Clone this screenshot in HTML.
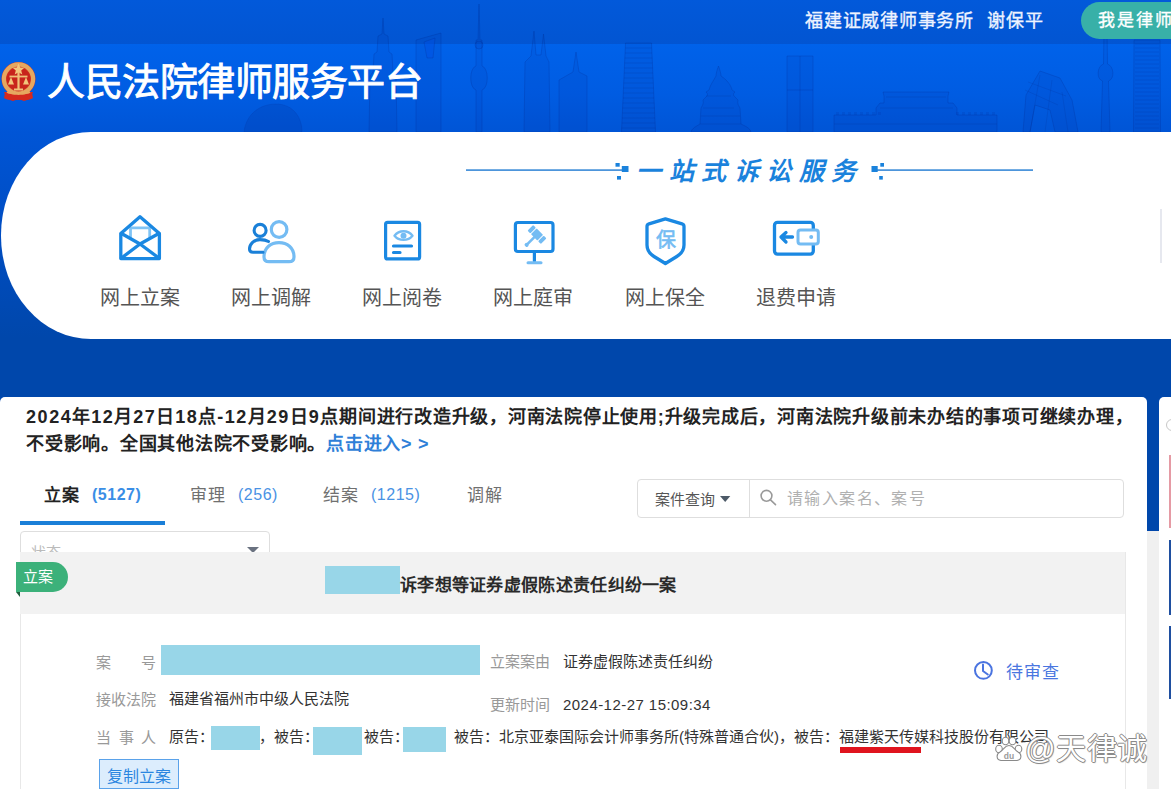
<!DOCTYPE html>
<html lang="zh-CN"><head><meta charset="utf-8">
<style>
*{margin:0;padding:0;box-sizing:border-box}
html,body{width:1171px;height:789px;overflow:hidden}
body{font-family:"Liberation Sans",sans-serif;text-spacing-trim:space-all;background:#0047ab;position:relative}
.abs{position:absolute;white-space:nowrap}
svg.abs{overflow:visible}
#topbar{left:0;top:0;width:1171px;height:44px;background:linear-gradient(#0259da,#0255d2)}
#banner{left:0;top:44px;width:1171px;height:300px;background:linear-gradient(#0062ea 0px,#005ce2 50px,#0055d6 88px,#004dc2 190px,#0047ab 294px)}
#title{left:47px;top:58px;font-size:38px;letter-spacing:-0.45px;color:#fff;line-height:48px;-webkit-text-stroke:0.9px #fff}
#firm1{left:805px;top:9px;font-size:18px;letter-spacing:0.75px;color:#eef3ff;line-height:24px;-webkit-text-stroke:0.35px #eef3ff}
#firm2{left:987px;top:9px;font-size:18px;letter-spacing:0.75px;color:#eef3ff;line-height:24px;-webkit-text-stroke:0.35px #eef3ff}
#btnlaw{left:1081px;top:2px;width:120px;height:37px;border-radius:19px;background:#38b0a8;color:#fff;font-size:17px;letter-spacing:2px;line-height:37px;padding-left:17px;-webkit-text-stroke:0.35px #fff}
#card{left:1px;top:132px;width:1170px;height:206.5px;background:#fff;border-radius:90px 0 0 90px/103px 0 0 103px}
.lbl{font-size:20px;color:#555;line-height:24px;top:286px}

#slogan{left:636px;top:155px;font-size:25px;color:#1a82dc;font-style:italic;font-weight:bold;letter-spacing:7.5px;line-height:32px}
#notice{left:0;top:397px;width:1147px;height:400px;background:#fff;border-radius:5px}
#side{left:1159px;top:397px;width:30px;height:400px;background:#fff;border-radius:5px}
#sidegap{left:1147px;top:531px;width:12px;height:260px;background:#f0f0f0}
#ntext{left:26px;top:404px;font-size:18px;letter-spacing:0.75px;font-weight:bold;color:#222;line-height:27px}
#ntext i{font-style:normal;letter-spacing:1.6px}
#ntext a{color:#2f7fd8;text-decoration:none;font-weight:bold}
.tab{top:484px;font-size:17px;letter-spacing:1px;color:#707070;line-height:24px}
.tabn{top:483px;font-size:16px;letter-spacing:0.5px;color:#4a92e4;line-height:24px}
.b{font-weight:bold}
.tab.b{color:#222}
.tabn.b{color:#3a8ee6}
#tabline{left:20px;top:521.3px;width:145px;height:3.3px;background:#1a7fd8}
#search{left:637px;top:479px;width:487px;height:39px;border:1px solid #dedede;border-radius:4px;background:#fff}
#sdiv{left:749px;top:479px;width:1px;height:39px;background:#dedede}
#stype{left:655px;top:490px;font-size:15px;color:#555;line-height:20px}
#sph{left:787px;top:488px;font-size:16px;letter-spacing:1.4px;color:#b0b0b0;line-height:22px}
#select{left:20px;top:531px;width:250px;height:40px;border:1px solid #dedede;border-radius:4px;background:#fff}
#selph{left:31px;top:543px;font-size:15px;color:#bbb;line-height:20px}
#band{left:20px;top:552px;width:1105px;height:62px;background:#f2f2f2}
#cardborder{left:20px;top:552px;width:1106px;height:260px;border:1px solid #e8e8e8}
#tag{left:16px;top:562px;width:52px;height:30px;background:#3cb17a;border-radius:0 15px 15px 0;color:#fff;font-size:15px;line-height:30px;padding-left:7px}
#tagfold{left:16px;top:592px;width:0;height:0;border-top:5px solid #1f5e3e;border-left:4px solid transparent}
.red{background:#98d6e8}
#ctitle{left:400px;top:574px;font-size:17px;letter-spacing:0.3px;font-weight:bold;color:#2a2a2a;line-height:24px}
.k{font-size:15px;color:#999;line-height:20px}
.v{font-size:15px;color:#333;line-height:20px}
#copybtn{left:99px;top:758.5px;width:80px;height:30px;background:#dcedfd;border:1.6px solid #5aa2ea;color:#2a86e0;font-size:16px;line-height:27px;padding-top:3px;text-align:center}
#status{left:1006px;top:662px;font-size:17px;letter-spacing:1.2px;color:#4a76e0;line-height:22px}
#uline{left:840px;top:747px;width:81px;height:6px;background:#e0141e}
#wm{left:1025px;top:731px;font-size:30px;letter-spacing:0.6px;color:#fff;line-height:36px;text-shadow:1px 0 0 #8a8a8a,-1px 0 0 #8a8a8a,0 1px 0 #8a8a8a,0 -1px 0 #8a8a8a,1px 1px 1px #aaa}
</style></head><body>
<div id="topbar" class="abs"></div>
<div id="banner" class="abs"></div>
<svg class="abs" style="left:0;top:0" width="1171" height="140" viewBox="0 0 1171 140">
<g fill="rgba(0,35,140,0.07)" stroke="rgba(0,35,130,0.2)" stroke-width="1">
<!-- dome building -->
<path d="M244,132 C246,114 260,104 276,104 C292,104 302,116 302,132 Z" fill="rgba(0,30,120,0.13)" stroke="rgba(0,30,120,0.12)"/>
<!-- Jin Mao -->
<path d="M383,18 L384,34 L388,36 L389,52 L392,54 L393,72 L396,76 L397,132 L369,132 L370,76 L373,72 L374,54 L377,52 L378,36 L382,34 Z"/>
<!-- SWFC -->
<path d="M416,40 L441,33 L441,132 L416,132 Z"/>
<path d="M424,42 L435,38 L433,58 L427,58 Z" fill="rgba(0,80,230,0.4)"/>
<!-- pearl tower -->
<path d="M479,4 L480,40 L482,40 L482,66 C489,68 489,88 482,90 L482,132 L476,132 L476,90 C469,88 469,68 476,66 L476,40 L478,40 Z"/>
<circle cx="479" cy="45" r="4"/>
<!-- twin spire -->
<path d="M534,31 L536,55 L541,55 L543.5,34 L546,56 L549,62 L550,132 L524,132 L525,62 L531,56 Z"/>
<!-- building -->
<path d="M559,132 L559,80 L573,72 L576,52 L579,72 L587,76 L587,132 Z"/>
<!-- cylinder tower -->
<path d="M625.5,43 L651.5,43 L655.5,132 L621.5,132 Z"/>
<g stroke="rgba(0,35,130,0.16)"><line x1="625.3" y1="48" x2="651.7" y2="48"/><line x1="625.0" y1="53" x2="652.0" y2="53"/><line x1="624.8" y1="58" x2="652.2" y2="58"/><line x1="624.6" y1="63" x2="652.4" y2="63"/><line x1="624.4" y1="68" x2="652.6" y2="68"/><line x1="624.1" y1="73" x2="652.9" y2="73"/><line x1="623.9" y1="78" x2="653.1" y2="78"/><line x1="623.7" y1="83" x2="653.3" y2="83"/><line x1="623.5" y1="88" x2="653.5" y2="88"/><line x1="623.2" y1="93" x2="653.8" y2="93"/><line x1="623.0" y1="98" x2="654.0" y2="98"/><line x1="622.8" y1="103" x2="654.2" y2="103"/><line x1="622.6" y1="108" x2="654.4" y2="108"/><line x1="622.4" y1="113" x2="654.6" y2="113"/><line x1="622.1" y1="118" x2="654.9" y2="118"/><line x1="621.9" y1="123" x2="655.1" y2="123"/><line x1="621.7" y1="128" x2="655.3" y2="128"/></g>
<!-- temple of heaven -->
<path d="M718.5,66 C720,70 721,74 721,76 C727,80 731,85 732,90 L735,92 C733,94 733,95 735,97 L738,100 C737,104 739,106 740,108 L741,124 C745,126 750,128 751,132 L691,132 C692,128 697,126 700,124 L701,108 C702,106 704,104 703,100 L706,97 C708,95 708,94 706,92 L709,90 C710,85 714,80 716,76 C716,74 717,70 718.5,66 Z"/>
<g stroke="rgba(0,35,130,0.16)"><line x1="706" y1="96" x2="731" y2="96"/><line x1="703" y1="108" x2="734" y2="108"/><line x1="701" y1="116" x2="740" y2="116"/><line x1="700" y1="124" x2="741" y2="124"/></g>
<!-- rect building -->
<path d="M787,56 L813,56 L813,132 L787,132 Z"/>
<line x1="800" y1="56" x2="800" y2="132"/><line x1="787" y1="90" x2="813" y2="90"/>
<!-- tiananmen -->
<path d="M834,132 L834,115 L876,115 L876,108 L880,103 L884,103 L884,96 L883,92 L949,92 L948,96 L948,103 L953,103 L957,108 L957,115 L997,115 L997,132 Z"/>
<g stroke="rgba(0,35,130,0.16)"><line x1="886" y1="97" x2="946" y2="97"/><line x1="880" y1="108" x2="953" y2="108"/><line x1="834" y1="124" x2="997" y2="124"/></g>
<g fill="rgba(0,35,140,0.12)" stroke="none"><rect x="836" y="112" width="3" height="3"/><rect x="842" y="112" width="3" height="3"/><rect x="848" y="112" width="3" height="3"/><rect x="854" y="112" width="3" height="3"/><rect x="860" y="112" width="3" height="3"/><rect x="866" y="112" width="3" height="3"/><rect x="872" y="112" width="3" height="3"/><rect x="878" y="112" width="3" height="3"/><rect x="956" y="112" width="3" height="3"/><rect x="962" y="112" width="3" height="3"/><rect x="968" y="112" width="3" height="3"/><rect x="974" y="112" width="3" height="3"/><rect x="980" y="112" width="3" height="3"/><rect x="986" y="112" width="3" height="3"/><rect x="992" y="112" width="3" height="3"/></g>
<!-- cctv -->
<path d="M1040,71 L1060,78 L1072,100 L1078,132 L1055,132 L1050,110 L1035,105 L1030,132 L1023,132 L1026,95 Z"/>
<!-- tower -->
<path d="M1104,30 L1107,30 L1107.5,64 C1114,66 1115,79 1108.5,81 L1110,132 L1101,132 L1102.5,81 C1096,79 1097,66 1103.5,64 Z"/>
<!-- right building -->
<path d="M1134,40 L1160,40 L1160.5,132 L1133.5,132 Z"/>
<g stroke="rgba(0,35,130,0.14)"><line x1="1135" y1="44" x2="1159" y2="44"/><line x1="1135" y1="48" x2="1159" y2="48"/><line x1="1135" y1="52" x2="1159" y2="52"/><line x1="1135" y1="56" x2="1159" y2="56"/><line x1="1135" y1="60" x2="1159" y2="60"/><line x1="1135" y1="64" x2="1159" y2="64"/><line x1="1135" y1="68" x2="1159" y2="68"/><line x1="1135" y1="72" x2="1159" y2="72"/><line x1="1135" y1="76" x2="1159" y2="76"/><line x1="1135" y1="80" x2="1159" y2="80"/><line x1="1135" y1="84" x2="1159" y2="84"/><line x1="1135" y1="88" x2="1159" y2="88"/><line x1="1135" y1="92" x2="1159" y2="92"/><line x1="1135" y1="96" x2="1159" y2="96"/><line x1="1135" y1="100" x2="1159" y2="100"/><line x1="1135" y1="104" x2="1159" y2="104"/><line x1="1135" y1="108" x2="1159" y2="108"/><line x1="1135" y1="112" x2="1159" y2="112"/><line x1="1135" y1="116" x2="1159" y2="116"/><line x1="1135" y1="120" x2="1159" y2="120"/><line x1="1135" y1="124" x2="1159" y2="124"/><line x1="1135" y1="128" x2="1159" y2="128"/><line x1="1025" y1="90" x2="1058" y2="105"/><line x1="1028" y1="82" x2="1066" y2="96"/><line x1="1040" y1="75" x2="1030" y2="132"/><line x1="1052" y1="80" x2="1045" y2="132"/><line x1="1062" y1="92" x2="1068" y2="132"/></g>
</g>
</svg>
<svg class="abs" style="left:0;top:59px" width="40" height="44" viewBox="0 0 40 44">
<path d="M4,33 L7,40 L13,42 L18.5,40 L24,42 L30,40 L33,33 Z" fill="#d8281e"/>
<circle cx="18.5" cy="20" r="17" fill="#d23a24"/>
<circle cx="18.5" cy="20" r="14.6" fill="none" stroke="#e6a860" stroke-width="4.2"/>
<circle cx="18.5" cy="20" r="11.8" fill="#c8241c"/>
<path d="M18.5,4.5 L20.2,8.6 L24.4,8.8 L21.2,11.5 L22.3,15.6 L18.5,13.3 L14.7,15.6 L15.8,11.5 L12.6,8.8 L16.8,8.6 Z" fill="#f4c67c"/>
<path d="M18.5,13 L18.5,30" stroke="#f0c078" stroke-width="2.2"/>
<path d="M9.5,17.5 L27.5,17.5" stroke="#f0c078" stroke-width="1.8"/>
<path d="M11,18 L8,25.5 L14,25.5 Z M26,18 L23,25.5 L29,25.5 Z" fill="#f2c47a"/>
<path d="M14,30.5 L23,30.5" stroke="#f0c078" stroke-width="2"/>
<path d="M5,34 C10,37 14,35 18.5,36 C23,35 27,37 32,34 L33,39 C28,42 24,40 18.5,41 C13,40 9,42 4,39 Z" fill="#d42a1e"/>
<path d="M7,33 C11,35.5 15,33 18.5,34 C22,33 26,35.5 30,33" stroke="#e6a860" stroke-width="1.6" fill="none"/>
</svg>
<div id="title" class="abs">人民法院律师服务平台</div>
<div id="firm1" class="abs">福建证威律师事务所</div>
<div id="firm2" class="abs">谢保平</div>
<div id="btnlaw" class="abs">我是律师</div>
<div id="card" class="abs"></div>
<div id="hline" class="abs"></div>
<div id="slogan" class="abs">一站式诉讼服务</div>
<div class="abs lbl" style="left:100px">网上立案</div>
<div class="abs lbl" style="left:231px">网上调解</div>
<div class="abs lbl" style="left:362px">网上阅卷</div>
<div class="abs lbl" style="left:493px">网上庭审</div>
<div class="abs lbl" style="left:625px">网上保全</div>
<div class="abs lbl" style="left:756px">退费申请</div>
<div class="abs" style="left:1160px;top:209px;width:2px;height:54px;background:#e6e8ef"></div>
<svg class="abs" style="left:0;top:0" width="1171" height="340" viewBox="0 0 1171 340">
<g fill="none" stroke-linecap="round" stroke-linejoin="round" stroke-width="3.3">
<!-- slogan decorations -->
<rect x="466" y="169.3" width="156" height="1.6" fill="#3a8ad8" stroke="none"/>
<rect x="877" y="169.3" width="156" height="1.6" fill="#3a8ad8" stroke="none"/>
<g fill="#1a82dc" stroke="none">
<rect x="621.8" y="166" width="6.7" height="6"/><rect x="615.5" y="163" width="4.2" height="3.7"/><rect x="617" y="176" width="4" height="3.6"/>
<rect x="871.5" y="166" width="6.2" height="6"/><rect x="880.3" y="163" width="3.7" height="3.7"/><rect x="879.2" y="176" width="3.6" height="3.6"/>
</g>
<!-- envelope -->
<path d="M130.5,237 L130.5,229.5 Q130.5,227.8 132.2,227.8 L148,227.8 Q149.7,227.8 149.7,229.5 L149.7,237" stroke="#80c4f5" stroke-width="2.8"/>
<path d="M120.8,233.5 L140,216.8 L159.4,233.5 L159.4,258.6 L120.8,258.6 Z" stroke="#1a88e2"/>
<path d="M121.5,233.5 L140,244 L158.8,233.5 M121.5,258 L140,244 L158.8,258" stroke="#1a88e2"/>
<!-- people -->
<circle cx="279.1" cy="229.5" r="7.8" stroke="#74bcf3" stroke-width="3.2"/>
<path d="M264,257 C264,247.5 271,242.6 279,242.6 C287,242.6 294,247.5 294,257 Q294,261.7 289,261.7 L269,261.7 Q264,261.7 264,257 Z" stroke="#74bcf3" stroke-width="3.2"/>
<circle cx="260.1" cy="230.4" r="6" stroke="#1a80d8" stroke-width="3.1"/>
<path d="M268.5,241.5 C266,240 263,239.6 260,239.6 C253.5,239.6 249.5,244.5 249.5,249 Q249.5,252.2 253,252.2 L263,252.2" stroke="#1a80d8" stroke-width="3.1"/>
<!-- document -->
<rect x="385.6" y="222.3" width="34" height="36.6" rx="2" stroke="#1a88e2" stroke-width="3.2"/>
<path d="M394.5,235.7 C399,229.8 408,229.8 412.5,235.7 C408,241.3 399,241.3 394.5,235.7 Z" stroke="#74bcf3" stroke-width="2.4"/>
<circle cx="403.5" cy="235.7" r="3" fill="#74bcf3" stroke="none"/>
<path d="M393.5,246 L411.5,246 M393.5,252.5 L400,252.5" stroke="#1a88e2" stroke-width="3.2"/>
<!-- monitor -->
<rect x="515.4" y="222.5" width="37.6" height="29" rx="2.5" stroke="#1a88e2" stroke-width="3.2"/>
<path d="M534.4,252.5 L534.4,261" stroke="#1a88e2" stroke-width="3.2"/>
<path d="M528,262.8 L541,262.8" stroke="#74bcf3" stroke-width="3"/>
<g transform="translate(537,234.5) rotate(45)" fill="#74bcf3" stroke="none">
<rect x="-9.5" y="-4" width="4" height="8" rx="1"/>
<rect x="-4.5" y="-4" width="9" height="8" rx="0.5"/>
<rect x="5.5" y="-4" width="4" height="8" rx="1"/>
<rect x="-1.3" y="3" width="2.6" height="12"/>
<rect x="-2" y="13" width="4" height="3.5" rx="1.5"/>
</g>
<!-- shield -->
<path d="M665.4,218.8 L649,223.8 Q647,224.5 647,226.5 L647,245 Q647,252 654,256.5 L665.4,263.5 L676.8,256.5 Q684,252 684,245 L684,226.5 Q684,224.5 682,223.8 Z" stroke="#1a88e2"/>
<!-- wallet -->
<rect x="774.5" y="222.4" width="38.8" height="31.7" rx="3" stroke="#1a88e2"/>
<rect x="798" y="230" width="20.3" height="14" rx="2.5" fill="#fff" stroke="#74bcf3" stroke-width="3"/>
<circle cx="811.2" cy="237" r="2" fill="#74bcf3" stroke="none"/>
<path d="M781,237 L792.5,237 M786,232.5 L781,237 L786,242" stroke="#1a88e2" stroke-width="3.3"/>
</g>
</svg>
<div class="abs" style="left:655.5px;top:227.5px;font-size:20px;color:#74bcf3;line-height:24px;-webkit-text-stroke:0.6px #74bcf3">保</div>
<div id="notice" class="abs"></div>
<div id="sidegap" class="abs"></div>
<div id="side" class="abs"></div>
<div id="ntext" class="abs"><i>2024</i>年<i>12</i>月<i>27</i>日<i>18</i>点<i>-12</i>月<i>29</i>日<i>9</i>点期间进行改造升级，河南法院停止使用;升级完成后，河南法院升级前未办结的事项可继续办理，<br>不受影响。全国其他法院不受影响。<a>点击进入&gt; &gt;</a></div>
<div class="abs tab b" style="left:43.5px">立案</div>
<div class="abs tabn b" style="left:92px">(5127)</div>
<div class="abs tab" style="left:190px">审理</div>
<div class="abs tabn" style="left:238px">(256)</div>
<div class="abs tab" style="left:323px">结案</div>
<div class="abs tabn" style="left:371px">(1215)</div>
<div class="abs tab" style="left:467px">调解</div>
<div id="tabline" class="abs"></div>
<div id="search" class="abs"></div>
<div id="sdiv" class="abs"></div>
<div id="stype" class="abs">案件查询</div>
<svg class="abs" style="left:0;top:0" width="1171" height="789"><polygon points="720,496 730.3,496 725.2,502" fill="#4d5a68"/><circle cx="766.5" cy="495.8" r="5.4" fill="none" stroke="#9a9a9a" stroke-width="1.6"/><line x1="770.5" y1="499.8" x2="775.5" y2="504.6" stroke="#9a9a9a" stroke-width="1.6" stroke-linecap="round"/></svg>
<div id="sph" class="abs">请输入案名、案号</div>
<div id="select" class="abs"></div>
<div id="selph" class="abs">状态</div>
<svg class="abs" style="left:0;top:0" width="1171" height="789"><polygon points="247,547 259,547 253,553" fill="#6a7280"/></svg>
<div id="cardborder" class="abs"></div>
<div id="band" class="abs"></div>
<div id="tag" class="abs">立案</div>
<div id="tagfold" class="abs"></div>
<div class="abs red" style="left:325px;top:566px;width:75px;height:28px"></div>
<div id="ctitle" class="abs">诉李想等证券虚假陈述责任纠纷一案</div>
<div class="abs k" style="left:96px;top:653px;letter-spacing:30px">案号</div>
<div class="abs red" style="left:161px;top:645px;width:319px;height:30px"></div>
<div class="abs k" style="left:490px;top:652px">立案案由</div>
<div class="abs v" style="left:563px;top:652px">证券虚假陈述责任纠纷</div>
<div class="abs k" style="left:96px;top:690px">接收法院</div>
<div class="abs v" style="left:169px;top:689px">福建省福州市中级人民法院</div>
<div class="abs k" style="left:490px;top:695px">更新时间</div>
<div class="abs v" style="left:563px;top:695px;letter-spacing:0.45px">2024-12-27 15:09:34</div>
<div class="abs k" style="left:96px;top:728px;letter-spacing:7.5px">当事人</div>
<div class="abs v" style="left:169px;top:727px">原告：</div>
<div class="abs red" style="left:211px;top:726px;width:49px;height:24px"></div>
<div class="abs v" style="left:259px;top:727px">，被告：</div>
<div class="abs red" style="left:313px;top:727px;width:49px;height:28px"></div>
<div class="abs v" style="left:364px;top:727px">被告：</div>
<div class="abs red" style="left:403px;top:727px;width:43px;height:25px"></div>
<div class="abs v" style="left:454px;top:727px">被告：北京亚泰国际会计师事务所(特殊普通合伙)，被告：福建紫天传媒科技股份有限公司</div>
<div id="copybtn" class="abs">复制立案</div>
<div id="status" class="abs">待审查</div>
<svg class="abs" style="left:0;top:0" width="1171" height="789"><circle cx="983.4" cy="670.4" r="8.4" fill="none" stroke="#4a74e0" stroke-width="2"/><path d="M983,664.5 L983,671 L987.8,674.5" fill="none" stroke="#4a74e0" stroke-width="2" stroke-linecap="round" stroke-linejoin="round"/></svg>
<div id="uline" class="abs"></div>
<svg class="abs" style="left:0;top:0" width="1171" height="789"><g fill="#fff" stroke="#8a8a8a" stroke-width="1.1">
<ellipse cx="999" cy="749" rx="3.3" ry="3.8"/><ellipse cx="1005.5" cy="741" rx="3.3" ry="3.8"/><ellipse cx="1012.5" cy="741" rx="3.3" ry="3.8"/><ellipse cx="1018.5" cy="749" rx="3.3" ry="3.8"/>
<path d="M1001,760.5 C996,760 996,754 1000,752 C1004,749 1005,745.5 1009,745.5 C1013,745.5 1014,749 1018,752 C1022,754 1022,760 1017,760.5 Z"/></g>
<text x="1009" y="759" font-size="8.5" font-family="Liberation Sans" font-weight="bold" fill="#9a9a9a" text-anchor="middle">du</text></svg>
<div id="wm" class="abs">@天律诚</div>
<div class="abs" style="left:1169px;top:455px;width:4px;height:73px;background:#e59aa4"></div>
<div class="abs" style="left:1169px;top:540px;width:4px;height:75px;background:#1f4fa0"></div>
<div class="abs" style="left:1169px;top:626px;width:4px;height:73px;background:#1f4fa0"></div>
<div class="abs" style="left:1166px;top:419px;width:12px;height:12px;border-radius:6px;border:1.5px solid #c8c8c8"></div>
</body></html>
